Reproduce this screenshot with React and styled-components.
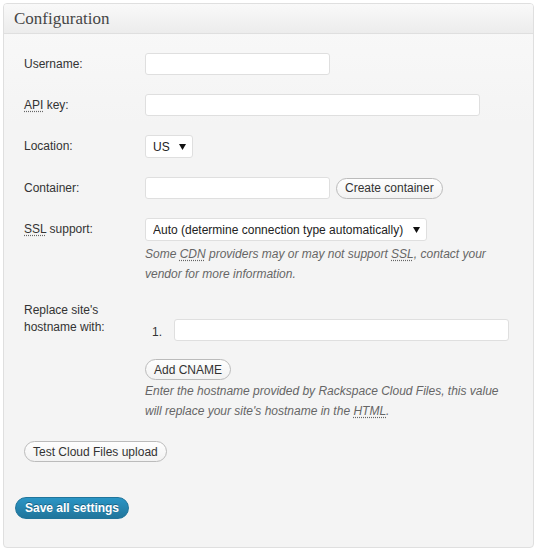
import React from 'react'
import styled, { createGlobalStyle } from 'styled-components'

const GlobalStyle = createGlobalStyle`
  body {
    margin: 0;
    background: #ffffff;
    font-family: "Liberation Sans", Arial, sans-serif;
    font-size: 12px;
    color: #333;
  }
`;

const Page = styled.div`
  padding: 3px;
`;

const Box = styled.div`
  width: 529px;
  border: 1px solid #dfdfdf;
  border-radius: 4px;
  background: linear-gradient(to bottom, #f9f9f9, #f4f4f4 120px);
  overflow: hidden;
`;

const Header = styled.h3`
  margin: 0;
  height: 29px;
  padding: 0 10px;
  display: flex;
  align-items: center;
  border-bottom: 1px solid #dfdfdf;
  background: linear-gradient(to bottom, #f9f9f9, #ececec);
  font-family: "Liberation Serif", "Times New Roman", serif;
  font-weight: normal;
  font-size: 17px;
  color: #464646;
`;

const Body = styled.div`
  padding: 10px 11px 28px 11px;
`;

const Form = styled.div`
  margin-left: 9px;
  width: 485px;
`;

const Row = styled.div`
  display: grid;
  grid-template-columns: 121px 364px;
  padding: ${p => p.$top || 9}px 0 10px;
`;

const Label = styled.div`
  line-height: ${p => p.$lh || 22}px;
  color: #333;
`;

const Field = styled.div`
  display: flex;
  flex-direction: column;
  align-items: flex-start;
`;

const Inline = styled.div`
  display: flex;
  align-items: center;
  gap: 6px;
`;

const Abbr = styled.abbr`
  text-decoration: underline dotted #666;
  text-underline-offset: 2px;
  cursor: help;
`;

const Input = styled.input`
  box-sizing: border-box;
  width: ${p => p.$w}px;
  height: 22px;
  margin: 0;
  padding: 2px 4px;
  border: 1px solid #dfdfdf;
  border-radius: 3px;
  background: #fff;
  font: inherit;
`;

const SelectWrap = styled.div`
  box-sizing: border-box;
  display: inline-flex;
  align-items: center;
  gap: 9px;
  height: 23px;
  padding: 0 6px 0 7px;
  border: 1px solid #dfdfdf;
  border-radius: 3px;
  background: #fff;
`;

const Select = styled.select`
  appearance: none;
  border: none;
  background: transparent;
  padding: 0;
  margin: 0;
  font-family: "Liberation Sans", Arial, sans-serif;
  font-size: 12px;
  color: #222;
  outline: none;
`;

const Button = styled.button`
  box-sizing: border-box;
  height: 21px;
  margin: 0;
  padding: 0 8px;
  border: 1px solid #bbb;
  border-radius: 11px;
  background: linear-gradient(to bottom, #fefefe, #f2f2f2);
  font-family: "Liberation Sans", Arial, sans-serif;
  font-size: 12px;
  color: #333;
  cursor: pointer;
  white-space: nowrap;
`;

const PrimaryButton = styled(Button)`
  height: 22px;
  padding: 0 9px;
  border-color: #21759b;
  background: linear-gradient(to bottom, #2a95c5, #21759b);
  color: #fff;
  font-weight: bold;
  text-shadow: 0 -1px 0 rgba(0, 0, 0, 0.3);
`;

const Description = styled.p`
  margin: ${p => p.$mt || 3}px 0 0;
  font-style: italic;
  line-height: 20px;
  color: #666;
`;

const List = styled.ol`
  list-style: none;
  margin: 17px 0 0;
  padding: 0;
`;

const ListItem = styled.li`
  display: flex;
  align-items: center;
`;

const Marker = styled.span`
  width: 22px;
  padding-left: 7px;
  padding-top: 3px;
`;

const AddButton = styled(Button)`
  margin-top: 18px;
`;

const TestButton = styled(Button)`
  margin-top: 10px;
`;

const SaveRow = styled.div`
  margin-top: 35px;
`;

const Arrow = () => (
  <svg width="7" height="6" viewBox="0 0 7 6">
    <polygon points="0,0 7,0 3.5,6" fill="#111" />
  </svg>
);

export default function App() {
  return (
    <Page>
      <GlobalStyle />
      <Box>
        <Header>Configuration</Header>
        <Body>
          <Form>
            <Row>
              <Label>Username:</Label>
              <Field><Input $w={185} /></Field>
            </Row>
            <Row>
              <Label><Abbr title="Application Programming Interface">API</Abbr> key:</Label>
              <Field><Input $w={335} /></Field>
            </Row>
            <Row>
              <Label>Location:</Label>
              <Field>
                <SelectWrap>
                  <Select defaultValue="us"><option value="us">US</option></Select>
                  <Arrow />
                </SelectWrap>
              </Field>
            </Row>
            <Row>
              <Label>Container:</Label>
              <Field>
                <Inline>
                  <Input $w={185} />
                  <Button>Create container</Button>
                </Inline>
              </Field>
            </Row>
            <Row>
              <Label><Abbr title="Secure Sockets Layer">SSL</Abbr> support:</Label>
              <Field>
                <SelectWrap>
                  <Select defaultValue="auto">
                    <option value="auto">Auto (determine connection type automatically)</option>
                  </Select>
                  <Arrow />
                </SelectWrap>
                <Description>
                  Some <Abbr title="Content Delivery Network">CDN</Abbr> providers may or may not support <Abbr title="Secure Sockets Layer">SSL</Abbr>, contact your vendor for more information.
                </Description>
              </Field>
            </Row>
            <Row $top={8}>
              <Label $lh={17}>Replace site's hostname with:</Label>
              <Field>
                <List>
                  <ListItem>
                    <Marker>1.</Marker>
                    <Input $w={335} />
                  </ListItem>
                </List>
                <AddButton>Add CNAME</AddButton>
                <Description $mt={1}>
                  Enter the hostname provided by Rackspace Cloud Files, this value will replace your site's hostname in the <Abbr title="Hypertext Markup Language">HTML</Abbr>.
                </Description>
              </Field>
            </Row>
            <TestButton>Test Cloud Files upload</TestButton>
          </Form>
          <SaveRow>
            <PrimaryButton>Save all settings</PrimaryButton>
          </SaveRow>
        </Body>
      </Box>
    </Page>
  );
}
